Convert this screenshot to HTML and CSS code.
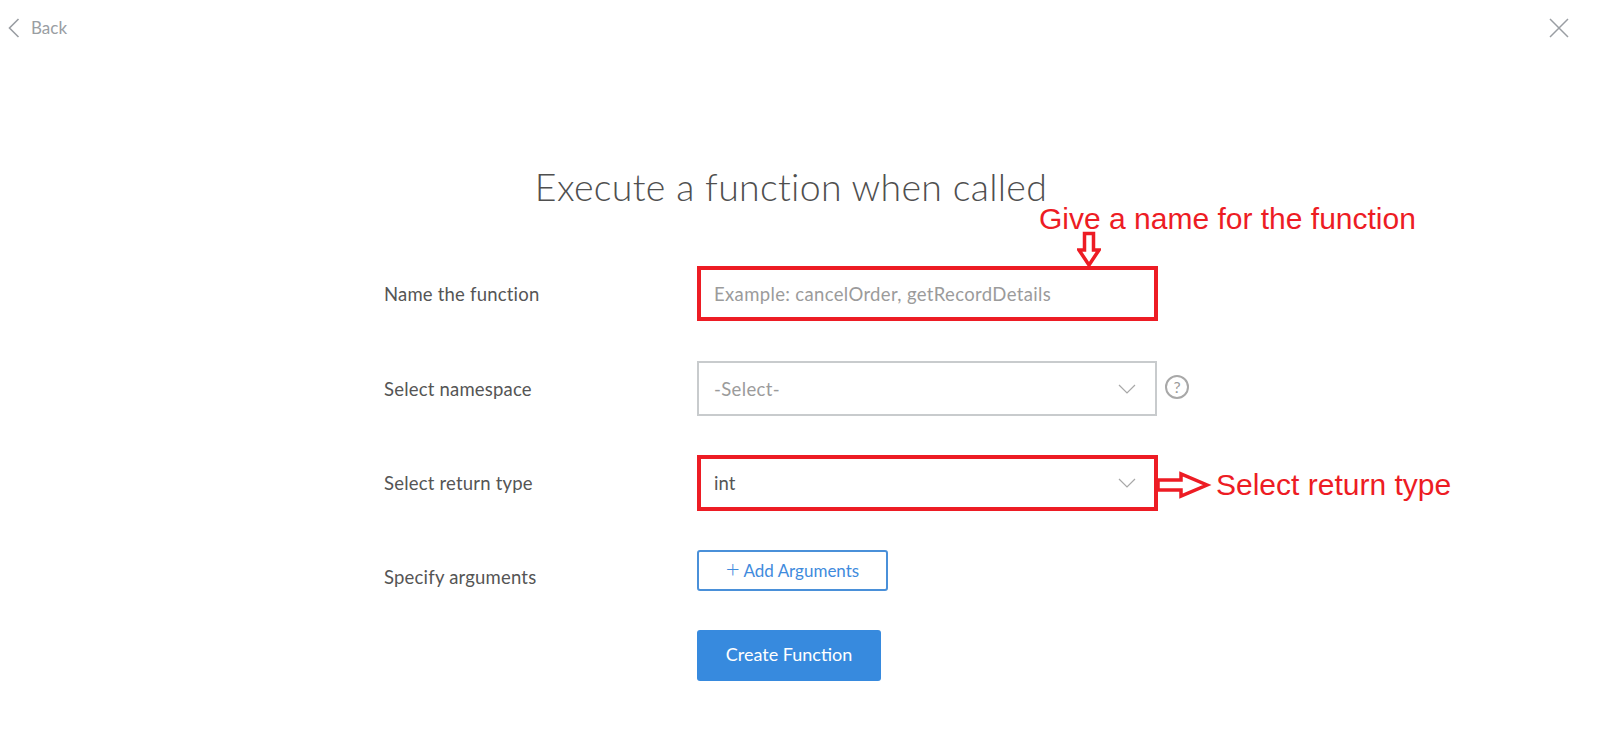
FILE: index.html
```html
<!DOCTYPE html>
<html lang="en">
<head>
<meta charset="UTF-8">
<title>Create Function</title>
<link rel="stylesheet" href="styles.css">
</head>
<body>
<div class="top">
	<a href="#" class="back">
		<svg width="12" height="20" viewBox="0 0 12 20"><path d="M10.5 1L1.5 10l9 9" fill="none" stroke="#9a9ea3" stroke-width="1.6"/></svg>
		<span>Back</span>
	</a>
	<a href="#" class="close">
		<svg width="20" height="20" viewBox="0 0 20 20"><path d="M1 1l18 18M19 1L1 19" fill="none" stroke="#9a9ea3" stroke-width="1.5"/></svg>
	</a>
</div>
<h1 class="title">Execute a function when called</h1>
<form class="form">
	<div class="row row-name">
		<label>Name the function</label>
		<div class="field marked">
			<span class="placeholder">Example: cancelOrder, getRecordDetails</span>
		</div>
		<div class="note note-name">Give a name for the function</div>
		<svg class="arrow-down" width="24" height="40" viewBox="0 0 24 40"><path d="M7.500 3.500H16.500V20H22L12 35L2 20H7.500Z" fill="#fff" stroke="#ed1c24" stroke-width="3.500"/></svg>
	</div>
	<div class="row row-space">
		<label>Select namespace</label>
		<div class="field">
			<span class="placeholder">-Select-</span>
			<svg class="caret" width="18" height="10" viewBox="0 0 18 10"><path d="M1 1l8 8 8-8" fill="none" stroke="#a8a8a8" stroke-width="1.200"/></svg>
		</div>
		<span class="help">?</span>
	</div>
	<div class="row row-type">
		<label>Select return type</label>
		<div class="field marked">
			<span class="value">int</span>
			<svg class="caret" width="18" height="10" viewBox="0 0 18 10"><path d="M1 1l8 8 8-8" fill="none" stroke="#a8a8a8" stroke-width="1.200"/></svg>
		</div>
		<svg class="arrow-right" width="58" height="30" viewBox="0 0 58 30"><path d="M3 10H26V4L52 15L26 26V20H3Z" fill="#fff" stroke="#ed1c24" stroke-width="3.500"/></svg>
		<div class="note note-type">Select return type</div>
	</div>
	<div class="row row-args">
		<label>Specify arguments</label>
		<button type="button" class="btn-add"><span class="plus">+</span> Add Arguments</button>
	</div>
	<div class="row row-submit">
		<button type="button" class="btn-create">Create Function</button>
	</div>
</form>
</body>
</html>
```

FILE: styles.css
```css
* {
	box-sizing: border-box;
}
html, body {
	margin: 0;
	padding: 0;
	height: 100%;
	background: #fff;
	overflow: hidden;
}
body {
	font-family: Lato, "Liberation Sans", sans-serif;
	color: #555;
}
a {
	text-decoration: none;
}
.top {
	height: 38px;
	display: flex;
	justify-content: space-between;
	align-items: center;
	padding: 18px 31px 0 8px;
}
.back {
	display: flex;
	align-items: center;
	gap: 11px;
	color: #9a9ea3;
	font-size: 17px;
}
.back span {
	line-height: 18px;
}
.close {
	display: flex;
}
.title {
	margin: 127px 0 0;
	padding-right: 18px;
	height: 44px;
	font-size: 37.500px;
	line-height: 44px;
	font-weight: 300;
	letter-spacing: 0.3px;
	text-align: center;
	color: #4f4f4f;
}
.form {
	width: 830px;
	margin: 57px auto 0;
	display: flex;
	flex-direction: column;
	gap: 39px;
}
.row {
	position: relative;
	display: flex;
	align-items: center;
}
.row label {
	width: 313px;
	margin-left: -1px;
	font-size: 18.500px;
	letter-spacing: 0.2px;
	color: #555;
}
.field {
	width: 460px;
	height: 55px;
	padding: 0 19px 0 15px;
	display: flex;
	align-items: center;
	justify-content: space-between;
	border: 2px solid #c8cbcd;
	font-size: 18.500px;
}
.field.marked {
	width: 461px;
	border: 4px solid #ed1c24;
	padding-left: 13px;
	padding-right: 18px;
}
.row-name .field {
	margin-bottom: 1px;
}
.row-type .field {
	height: 56px;
}
.placeholder {
	color: #9b9b9b;
	letter-spacing: 0.35px;
}
.value {
	color: #555;
}
.help {
	width: 24px;
	height: 24px;
	margin: 0 0 4px 8px;
	border: 2px solid #a8a8a8;
	border-radius: 50%;
	color: #9b9b9b;
	font-size: 16px;
	line-height: 20px;
	text-align: center;
}
.row-args {
	align-items: flex-start;
}
.row-args label {
	padding-top: 16px;
}
.btn-add {
	width: 191px;
	height: 41px;
	padding: 0;
	border: 2px solid #4a90d9;
	border-radius: 3px;
	background: #fff;
	color: #3f8bdd;
	font: 17px Lato, "Liberation Sans", sans-serif;
}
.plus {
	font-size: 24px;
	font-weight: 300;
	line-height: 16px;
}
.row-submit {
	padding-left: 312px;
}
.btn-create {
	width: 184px;
	height: 51px;
	padding: 0 0 3px;
	border: 0;
	border-radius: 3px;
	background: #378ade;
	color: #fff;
	font: 18px Lato, "Liberation Sans", sans-serif;
}
/* red notes drawn over the form */
.note {
	position: absolute;
	color: #ed1c24;
	font-family: "Liberation Sans", Arial, sans-serif;
	font-size: 30px;
	line-height: 34px;
	white-space: nowrap;
}
.note-name {
	left: 654px;
	top: -64px;
}
.note-type {
	left: 831px;
	top: 13px;
}
.arrow-down {
	position: absolute;
	left: 692px;
	top: -36px;
}
.arrow-right {
	position: absolute;
	left: 770px;
	top: 15px;
}
```
